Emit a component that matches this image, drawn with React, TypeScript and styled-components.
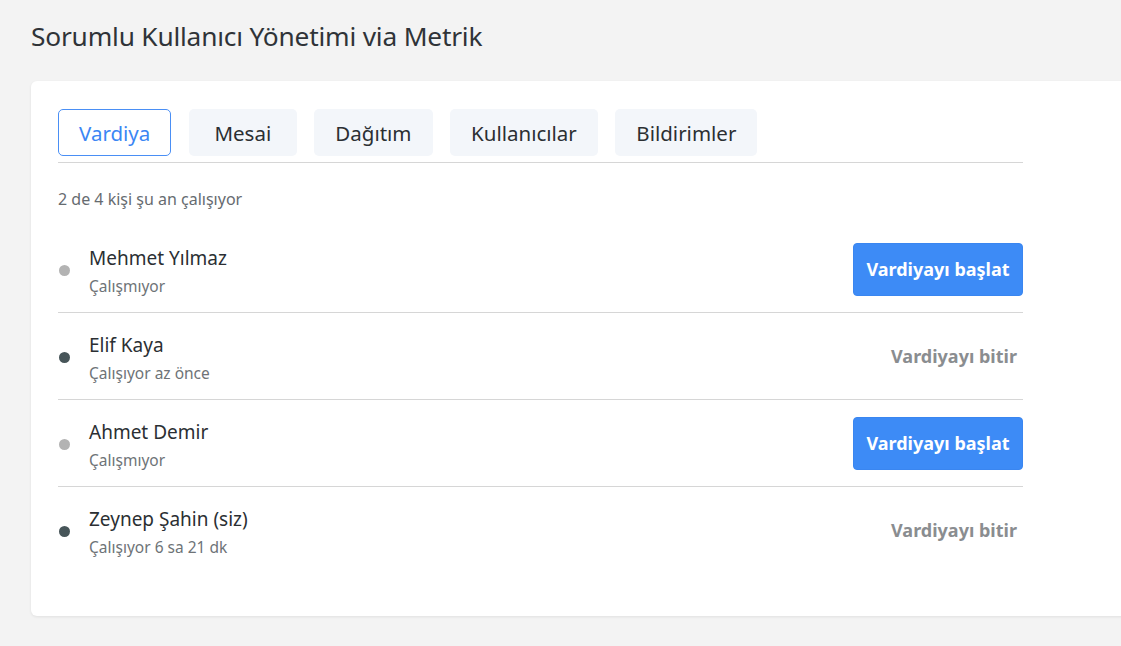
import React, { useState } from "react";
import styled, { createGlobalStyle } from "styled-components";

interface Member {
  id: number;
  name: string;
  working: boolean;
  status: string;
}

const members: Member[] = [
  { id: 1, name: "Mehmet Yılmaz", working: false, status: "Çalışmıyor" },
  { id: 2, name: "Elif Kaya", working: true, status: "Çalışıyor az önce" },
  { id: 3, name: "Ahmet Demir", working: false, status: "Çalışmıyor" },
  { id: 4, name: "Zeynep Şahin (siz)", working: true, status: "Çalışıyor 6 sa 21 dk" },
];

const tabs = ["Vardiya", "Mesai", "Dağıtım", "Kullanıcılar", "Bildirimler"];

const GlobalStyle = createGlobalStyle`
  html, body {
    margin: 0;
    padding: 0;
    background: #f3f3f3;
    overflow: hidden;
  }
  body {
    font-family: "Noto Sans", "Open Sans", sans-serif;
    color: #2b2f33;
  }
`;

const Page = styled.div`
  width: 1121px;
  height: 646px;
  padding: 17px 0 0 31px;
  box-sizing: border-box;
  overflow: hidden;
`;

const Title = styled.h1`
  margin: 0 0 26px;
  font-size: 26.3px;
  font-weight: 400;
  line-height: 38px;
  color: #2f3338;
  letter-spacing: -0.2px;
`;

const Card = styled.div`
  width: 1120px;
  height: 535px;
  box-sizing: border-box;
  background: #ffffff;
  border-radius: 6px;
  box-shadow: 0 1px 3px rgba(0, 0, 0, 0.08);
  padding: 28px 0 0 27px;
`;

const Content = styled.div`
  width: 965px;
`;

const TabBar = styled.div`
  display: flex;
  gap: 17.5px;
  padding-bottom: 6px;
  border-bottom: 1px solid #d6d6d6;
`;

const Tab = styled.button<{ $active: boolean }>`
  height: 47px;
  min-width: 108px;
  padding: 0 20px;
  border-radius: 5px;
  border: 1px solid ${(p) => (p.$active ? "#4a8ff5" : "transparent")};
  background: ${(p) => (p.$active ? "#ffffff" : "#f3f6fa")};
  color: ${(p) => (p.$active ? "#3b86f4" : "#2b2f33")};
  font-family: inherit;
  font-size: 20.5px;
  cursor: pointer;
`;

const Summary = styled.div`
  margin: 25px 0 16px;
  font-size: 16px;
  color: #666b70;
`;

const List = styled.div`
  display: flex;
  flex-direction: column;
`;

const Row = styled.div`
  display: flex;
  align-items: center;
  height: 86px;
  border-bottom: 1px solid #d6d6d6;
  &:last-child {
    border-bottom: none;
  }
`;

const Dot = styled.span<{ $working: boolean }>`
  width: 11px;
  height: 11px;
  border-radius: 50%;
  margin: 2px 19px 0 1px;
  background: ${(p) => (p.$working ? "#475559" : "#b3b3b3")};
  flex-shrink: 0;
`;

const Info = styled.div`
  flex: 1;
  display: flex;
  flex-direction: column;
  gap: 5px;
  margin-top: 4px;
`;

const Name = styled.div`
  font-size: 19px;
  color: #2b2f33;
  line-height: 25px;
`;

const Status = styled.div`
  font-size: 15.5px;
  color: #6e7377;
  line-height: 21px;
`;

const ShiftButton = styled.button<{ $start: boolean }>`
  height: 53px;
  width: 170px;
  border-radius: 4px;
  border: 1px solid ${(p) => (p.$start ? "#3a86f0" : "transparent")};
  background: ${(p) => (p.$start ? "#3d8bf6" : "transparent")};
  color: ${(p) => (p.$start ? "#ffffff" : "#8a8d90")};
  font-family: inherit;
  font-size: 18px;
  font-weight: 700;
  text-align: ${(p) => (p.$start ? "center" : "right")};
  padding: 0 5px;
  white-space: nowrap;
  cursor: pointer;
`;

export default function App() {
  const [active, setActive] = useState("Vardiya");
  const count = members.filter((m) => m.working).length;

  return (
    <>
      <GlobalStyle />
      <Page>
        <Title>Sorumlu Kullanıcı Yönetimi via Metrik</Title>
        <Card>
          <Content>
            <TabBar>
              {tabs.map((t) => (
                <Tab key={t} $active={t === active} onClick={() => setActive(t)}>
                  {t}
                </Tab>
              ))}
            </TabBar>
            <Summary>
              {count} de {members.length} kişi şu an çalışıyor
            </Summary>
            <List>
              {members.map((m) => (
                <Row key={m.id}>
                  <Dot $working={m.working} />
                  <Info>
                    <Name>{m.name}</Name>
                    <Status>{m.status}</Status>
                  </Info>
                  <ShiftButton $start={!m.working}>
                    {m.working ? "Vardiyayı bitir" : "Vardiyayı başlat"}
                  </ShiftButton>
                </Row>
              ))}
            </List>
          </Content>
        </Card>
      </Page>
    </>
  );
}
